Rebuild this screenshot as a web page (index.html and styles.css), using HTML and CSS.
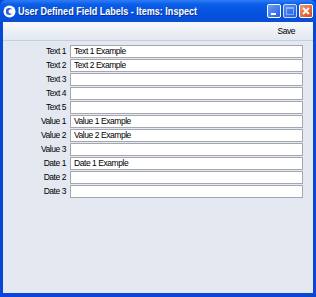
FILE: index.html
```html
<!DOCTYPE html>
<html lang="en">
<head>
  <meta charset="UTF-8">
  <title>User Defined Field Labels - Items: Inspect</title>
  <link rel="stylesheet" href="styles.css">
</head>
<body>

<div class="window">
  <div class="titlebar">
    <svg class="app-icon" width="13" height="13" viewBox="0 0 13 13">
      <circle cx="6.5" cy="6.5" r="6" fill="#ffffff"/>
      <path d="M3 4.5 C4.5 2.5 8 2.5 9.5 4.5 C8 4 6 4.2 5.5 6 C5.2 7.5 6.5 9 9 8.8 C7.5 10.5 4 10.5 3 8 Z" fill="#2a63d6"/>
    </svg>
    <span class="title">User Defined Field Labels - Items: Inspect</span>
    <div class="controls">
      <span class="ctl min"><i></i></span>
      <span class="ctl max"><i></i></span>
      <span class="ctl close">
        <svg width="14" height="14" viewBox="0 0 14 14">
          <path d="M4 4 L10 10 M10 4 L4 10" stroke="#fff" stroke-width="1.8"/>
        </svg>
      </span>
    </div>
  </div>

  <div class="client">
    <div class="toolbar">
      <span class="tool">Save</span>
    </div>

    <div class="fields">
      <label>Text 1</label><div class="field">Text 1 Example</div>
      <label>Text 2</label><div class="field">Text 2 Example</div>
      <label>Text 3</label><div class="field"></div>
      <label>Text 4</label><div class="field"></div>
      <label>Text 5</label><div class="field"></div>
      <label>Value 1</label><div class="field">Value 1 Example</div>
      <label>Value 2</label><div class="field">Value 2 Example</div>
      <label>Value 3</label><div class="field"></div>
      <label>Date 1</label><div class="field">Date 1 Example</div>
      <label>Date 2</label><div class="field"></div>
      <label>Date 3</label><div class="field"></div>
    </div>
  </div>
</div>

</body>
</html>
```

FILE: styles.css
```css
html, body {
  margin: 0;
  padding: 0;
}
body {
  font-family: 'Liberation Sans', Arial, sans-serif;
  font-size: 8.5px;
  letter-spacing: -0.45px;
  color: #000;
}
.window {
  width: 316px;
  height: 297px;
  display: flex;
  flex-direction: column;
  background: #0846d8;
  box-sizing: border-box;
}
.titlebar {
  height: 22px;
  display: flex;
  align-items: center;
  padding-left: 3px;
  background: linear-gradient(#2f7cf6 0%, #0a5ee8 20%, #0552df 60%, #0a4ed6 100%);
  border-radius: 6px 6px 0 0;
  color: #fff;
}
.app-icon {
  margin-right: 2px;
  flex-shrink: 0;
}
.title {
  font-family: 'Liberation Sans', Arial, sans-serif;
  font-weight: bold;
  font-size: 11px;
  letter-spacing: 0;
  text-shadow: 1px 1px 0 #0a2f8f;
  white-space: nowrap;
  transform: scaleX(0.82);
  transform-origin: left center;
}
.controls {
  margin-left: auto;
  display: flex;
  gap: 2px;
  margin-right: 3px;
}
.ctl {
  width: 14px;
  height: 14px;
  border: 1px solid #fff;
  border-radius: 2px;
  box-sizing: border-box;
  background: linear-gradient(135deg, #6a9cf8, #2860e0);
  position: relative;
  display: block;
}
.ctl.min i {
  position: absolute;
  left: 3px;
  bottom: 2px;
  width: 5px;
  height: 2px;
  background: #fff;
}
.ctl.max i {
  position: absolute;
  left: 2px;
  top: 2px;
  width: 8px;
  height: 8px;
  box-sizing: border-box;
  border: 1px solid #fff;
  border-top-width: 2px;
  opacity: 0.55;
}
.ctl.max {
  opacity: 0.8;
}
.ctl.close {
  background: linear-gradient(135deg, #f09a70, #d8471c);
}
.ctl.close svg {
  position: absolute;
  left: -1px;
  top: -1px;
}
.client {
  flex: 1;
  margin: 0 3px 4px 3px;
  background: #e3e8f1;
  display: flex;
  flex-direction: column;
}
.toolbar {
  height: 18px;
  border-bottom: 1px solid #c5cedb;
  background: linear-gradient(#f6f8fb, #e3e8f1);
  display: flex;
  align-items: center;
  justify-content: flex-end;
  padding-right: 18px;
}
.tool {
  font-size: 8.5px;
}
.fields {
  display: grid;
  grid-template-columns: 63px 233px;
  column-gap: 4px;
  row-gap: 1px;
  margin-top: 4px;
}
.fields label {
  text-align: right;
  line-height: 13px;
  white-space: nowrap;
}
.field {
  height: 13px;
  box-sizing: border-box;
  border: 1px solid #a4a8ae;
  background: #fff;
  line-height: 11px;
  padding-left: 3px;
  white-space: nowrap;
}
```
